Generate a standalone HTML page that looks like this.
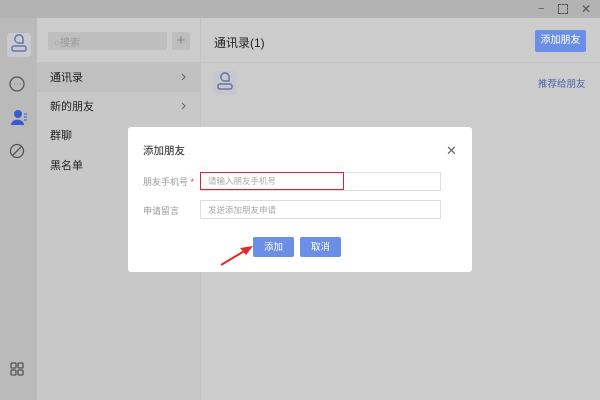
<!DOCTYPE html>
<html><head><meta charset="utf-8"><style>
*{margin:0;padding:0;box-sizing:border-box}
body{width:600px;height:400px;overflow:hidden;position:relative;background:#cccccc;font-family:"Liberation Sans","Noto Sans CJK SC",sans-serif;}
.a{position:absolute}
.btn{text-align:center;line-height:12px}
</style></head><body>
<div class="a" style="left:0;top:0;width:600px;height:18px;background:#b3b3b3"></div>
<div class="a" style="left:538px;top:3px;font-size:11px;color:#555">−</div>
<div class="a" style="left:558px;top:4px;width:10px;height:10px;border:1.5px dashed #555"></div>
<div class="a" style="left:581px;top:2px;font-size:12px;color:#555">✕</div>
<div class="a" style="left:0;top:18px;width:37px;height:382px;background:#bababa"></div>
<div class="a" style="left:7px;top:33px;width:24px;height:24px;background:#c9c9cf;border-radius:3px"></div>
<svg class="a" style="left:0;top:18px" width="37" height="382">
<g fill="none" stroke="#6677aa" stroke-width="1.5"><path d="M15 22 a4 4 0 0 1 8 -2 v5 h-4 a4 4 0 0 1 -4 -3z"/><rect x="12" y="28" width="14" height="5" rx="2"/></g>
<g fill="none" stroke="#555" stroke-width="1.3"><circle cx="17" cy="66" r="7"/><path d="M14 66h0.5M17 66h0.5M20 66h0.5"/><circle cx="17" cy="133" r="6.5"/><path d="M13 137l8-8"/>
<rect x="11" y="345" width="5" height="5" rx="1"/><rect x="18" y="345" width="5" height="5" rx="1"/><rect x="11" y="352" width="5" height="5" rx="1"/><rect x="18" y="352" width="5" height="5" rx="1"/></g>
<circle cx="18" cy="96" r="4" fill="#3b5bcc"/><path d="M11 107a6 5 0 0 1 13 0z" fill="#3b5bcc"/><path d="M24 96h3M24 99h3M24 102h3" stroke="#3b5bcc"/>
</svg>
<div class="a" style="left:37px;top:18px;width:163px;height:382px;background:#c8c8c8"></div>
<div class="a" style="left:37px;top:18px;width:163px;height:44px;background:#cccccc"></div>
<div class="a" style="left:48px;top:32px;width:119px;height:18px;background:#bebebe;border-radius:2px;font-size:10px;color:#999;padding:2px 0 0 6px">○搜索</div>
<div class="a btn" style="left:172px;top:32px;width:18px;height:18px;background:#bebebe;border-radius:2px;font-size:15px;color:#888;padding-top:3px">+</div>
<div class="a" style="left:37px;top:62px;width:163px;height:30px;background:#c0c0c0"></div>
<div class="a" style="left:50px;top:69px;font-size:11px;color:#222">通讯录</div>
<div class="a" style="left:50px;top:98px;font-size:11px;color:#222">新的朋友</div>
<div class="a" style="left:50px;top:127px;font-size:11px;color:#222">群聊</div>
<div class="a" style="left:50px;top:157px;font-size:11px;color:#222">黑名单</div>
<svg class="a" style="left:180px;top:73px" width="8" height="44"><path d="M2 1l3 3-3 3M2 30l3 3-3 3" fill="none" stroke="#666" stroke-width="1"/></svg>
<div class="a" style="left:200px;top:18px;width:1px;height:382px;background:#c2c2c2"></div>
<div class="a" style="left:200px;top:62px;width:400px;height:1px;background:#c2c2c2"></div>
<div class="a" style="left:214px;top:34px;font-size:12px;color:#222">通讯录(1)</div>
<div class="a btn" style="left:535px;top:30px;width:51px;height:22px;background:#6b8fe6;border-radius:2px;color:#fff;font-size:10px;padding-top:5px">添加朋友</div>
<div class="a" style="left:213px;top:71px;width:24px;height:24px;background:#c6c6cc;border-radius:3px"></div>
<svg class="a" style="left:213px;top:71px" width="24" height="24"><g fill="none" stroke="#6677aa" stroke-width="1.5"><path d="M8 7 a4 4 0 0 1 8 -2 v5 h-4 a4 4 0 0 1 -4 -3z"/><rect x="5" y="13" width="14" height="5" rx="2"/></g></svg>
<div class="a" style="left:538px;top:76px;font-size:9.5px;color:#4a63a8">推荐给朋友</div>
<div class="a" style="left:128px;top:127px;width:344px;height:145px;background:#fff;border-radius:3px"></div>
<div class="a" style="left:143px;top:143px;font-size:10.5px;color:#222">添加朋友</div>
<div class="a" style="left:446px;top:143px;font-size:13px;color:#666">✕</div>
<div class="a" style="left:143px;top:175px;font-size:9px;color:#999">朋友手机号 <span style="color:#e33">*</span></div>
<div class="a" style="left:143px;top:204px;font-size:9px;color:#999">申请留言</div>
<div class="a" style="left:200px;top:172px;width:241px;height:19px;border:1px solid #ddd"></div>
<div class="a" style="left:200px;top:172px;width:144px;height:18px;border:1.5px solid #d8262b;font-size:8.5px;color:#aaa;padding:2px 0 0 7px">请输入朋友手机号</div>
<div class="a" style="left:200px;top:200px;width:241px;height:19px;border:1px solid #ddd;font-size:8.5px;color:#aaa;padding:3px 0 0 7px">发送添加朋友申请</div>
<div class="a btn" style="left:253px;top:237px;width:41px;height:20px;background:#6b8fe6;border-radius:2px;color:#fff;font-size:9.5px;padding-top:5px">添加</div>
<div class="a btn" style="left:300px;top:237px;width:41px;height:20px;background:#6b8fe6;border-radius:2px;color:#fff;font-size:9.5px;padding-top:5px">取消</div>
<svg class="a" style="left:0;top:0" width="600" height="400"><path d="M221 265 L246 250" stroke="#e02a2a" stroke-width="2"/><path d="M253 246 L240 248 L246 255z" fill="#e02a2a"/></svg>
</body></html>
